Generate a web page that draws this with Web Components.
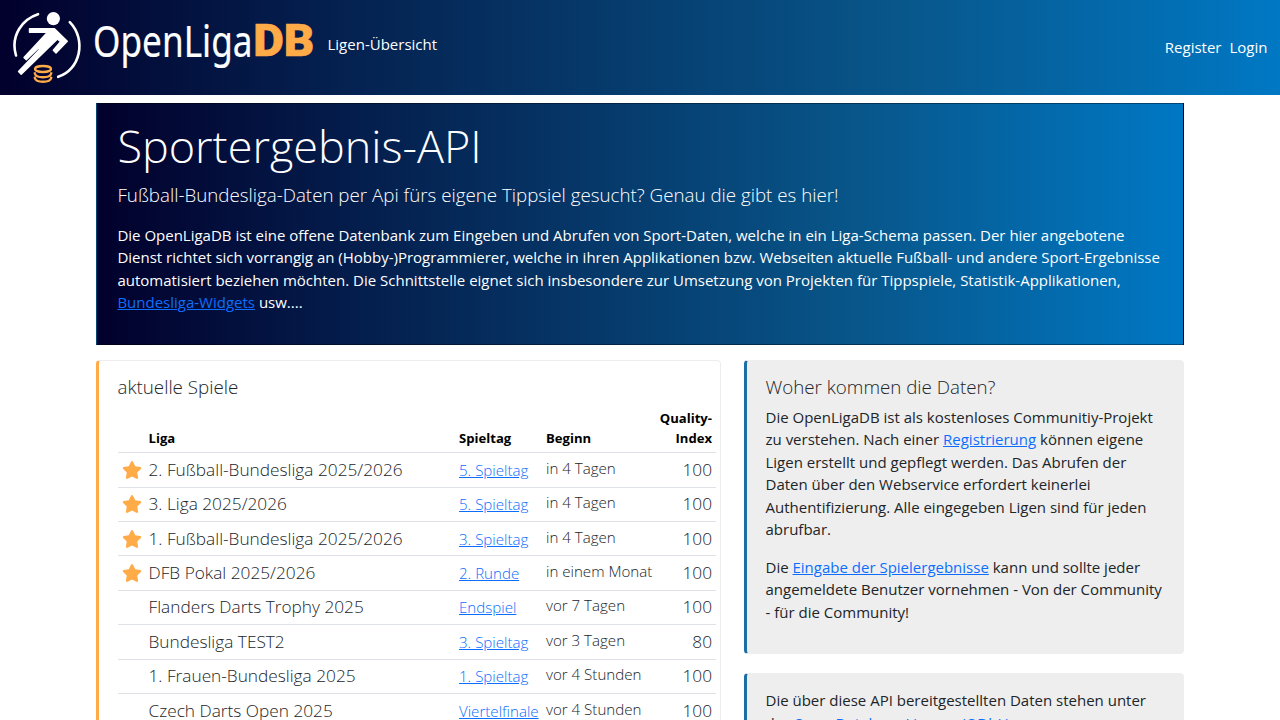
<!DOCTYPE html>
<html lang="de">
<head>
<meta charset="utf-8">
<title>OpenLigaDB</title>
<style>
html,body{margin:0;height:100%;overflow:hidden;background:#fff}
body{font:15px/22.5px "Open Sans",sans-serif;color:#212529;--sky:linear-gradient(90deg,#02002c,#08568a 70%,#0078c4)}
</style>
</head>
<body>
<liga-page></liga-page>
<script>
const define = (name, css, html, setup) => {
  const t = document.createElement('template');
  t.innerHTML = `<style>*{box-sizing:border-box}${css}</style>${html}`;
  customElements.define(name, class extends HTMLElement {
    constructor() {
      super();
      this.attachShadow({mode: 'open'}).appendChild(t.content.cloneNode(true));
    }
    connectedCallback() { if (setup) setup(this, this.shadowRoot); }
  });
};

define('liga-logo', `:host{display:block;width:302px;height:76px}svg{display:block}text{font-family:"Noto Sans","Open Sans",sans-serif}.db{font-family:Roboto,sans-serif}`, `
<svg width="302" height="76" viewBox="12 10 302 76">
  <g fill="none" stroke="#fff" stroke-linecap="round">
    <path d="M38 14.2C23 19 10 35 16 55.500" stroke-width="2.6"/>
    <path d="M69.800 22.200C87 40 80 70 58.200 76.800" stroke-width="2.6"/>
  </g>
  <circle cx="53.4" cy="18.6" r="6.6" fill="#fff"/>
  <path d="M29.500 28.800H54.500L67.300 41.200L56 53L53.300 50.300L60.500 41.800L57.500 39L21.200 74.300L18.500 71.600L40.500 48.600L38.300 48.200L26.300 59.800L24 57.500L47.500 32.300H29.500Z" fill="#fff" stroke="#fff" stroke-width="1.400" stroke-linejoin="round"/>
  <g fill="none" stroke="#ffab48" stroke-width="2.3">
    <ellipse cx="43" cy="69" rx="8" ry="3"/>
    <path d="M34.800 72.200V73.500C36 78.500 50 78.500 51.200 73.500V72.200M34.800 76.800V78C36 83 50 83 51.200 78V76.800"/>
  </g>
  <text x="93" y="56.500" font-size="44" fill="#fff" stroke="#fff" stroke-width=".2" textLength="159.500" lengthAdjust="spacingAndGlyphs">OpenLiga</text>
  <text class="db" x="253.300" y="56.300" font-size="43.500" font-weight="900" fill="#ffab48" stroke="#ffab48" stroke-width=".6" textLength="61" lengthAdjust="spacingAndGlyphs">DB</text>
</svg>`);

define('liga-header', `:host{display:flex;height:95px;padding:10px 12.500px 0 12px;color:#fff;background:var(--sky)}
nav{flex:1;padding:23px 0 0 3.500px;margin-left:10px}
.user{display:flex;gap:8px;padding-top:26px}`, `
<liga-logo></liga-logo><nav><slot></slot></nav><div class="user"><slot name="user"></slot></div>`);

define('liga-hero', `:host{display:block;height:242px;margin:8px 96px 0;padding:12px 20px 0 20.400px;border:1px solid rgba(0,0,0,.4);background:var(--sky);color:#fff}
h1{font-size:45px;line-height:56px;font-weight:300;margin:2px 0 11px}
.lead{font-size:18.750px;line-height:28px;font-weight:300;margin:-4px 0 14.600px}
p{margin:0}`, `
<h1><slot name="title"></slot></h1><div class="lead"><slot name="lead"></slot></div><p><slot></slot></p>`);

define('liga-link', `:host{display:inline;color:#0d6efd;text-decoration:underline}`, `<slot></slot>`);

define('liga-star', `:host{display:block;width:20px;height:18px}svg{display:block}`, `
<svg width="20" height="18" viewBox="0 0 576 512"><path fill="#ffab48" d="M316.9 18C311.600 7 300.400 0 288.100 0s-23.400 7-28.800 18L195 150.300 51.400 171.500c-12 1.800-22 10.200-25.700 21.700s-.7 24.200 7.900 32.700L137.800 329 113.200 474.700c-2 12 3 24.200 12.900 31.300s23 8 33.800 2.300l128.300-68.500 128.300 68.500c10.800 5.700 23.900 4.900 33.800-2.300s14.900-19.300 12.900-31.300L438.500 329 542.700 225.900c8.600-8.500 11.700-21.200 7.900-32.700s-13.700-19.900-25.700-21.700L381.200 150.300 316.900 18z"/></svg>`);

define('liga-card', `:host{display:block;padding:15px 18px 0 18.500px;border:1px solid #ededed;border-left:3px solid #ffab48;border-radius:4px;background:#fff}
:host([info]){border-color:#eee;border-left-color:#1b6fa5;background:#eee}
h2{font-size:18.750px;line-height:22.500px;font-weight:300;margin:0 0 7.300px}`, `
<h2><slot name="title"></slot></h2><slot></slot>`, (el, root) => {
  if (!el.querySelector('[slot=title]')) root.querySelector('h2').remove();
});

const cols = `display:grid;grid-template-columns:27px 310.500px 87px 114px 1fr;padding-right:4px;border-bottom:1px solid #dee2e6;`;
define('match-head', `:host{${cols}align-items:end;height:47.500px;padding-bottom:4.400px;padding-left:4px;font-size:13.100px;line-height:20px;font-weight:700;color:#000}
.q{text-align:right;margin-left:-10px}`, `
<span></span><span>Liga</span><span>Spieltag</span><span>Beginn</span><span class="q">Quality-<br>Index</span>`);

define('match-row', `:host{${cols}height:34.375px;padding-left:4px;font-weight:300;font-size:15.100px;line-height:26px}
span{white-space:nowrap}
liga-star{margin-top:7.500px}.l,.q{font-size:17.250px;padding-top:3.600px}.s{padding-top:3.600px}.b{padding-top:1.600px}.q{text-align:right}`, `
<div class="st"></div><span class="l"></span><span class="s"><liga-link></liga-link></span><span class="b"></span><span class="q"></span>`, (el, root) => {
  const [l, s, b, q] = el.getAttribute('data').split('|');
  root.querySelector('.l').textContent = l;
  root.querySelector('liga-link').textContent = s;
  root.querySelector('.b').textContent = b;
  root.querySelector('.q').textContent = q;
  if (el.hasAttribute('star')) root.querySelector('.st').appendChild(document.createElement('liga-star'));
});

define('liga-page', `:host{display:block;height:720px;overflow:hidden}
main{display:grid;grid-template-columns:625px 440px;gap:23px;align-items:start;padding:15px 96px 0}
.games{height:700px;padding-right:4px}
aside{display:grid;gap:19px}
p{margin:0 0 15px}
.first{height:294px}.second{height:120px;padding-top:15px}`, `
<liga-header><span>Ligen-Übersicht</span><span slot="user">Register</span><span slot="user">Login</span></liga-header>
<liga-hero><span slot="title">Sportergebnis-API</span><span slot="lead">Fußball-Bundesliga-Daten per Api fürs eigene Tippsiel gesucht? Genau die gibt es hier!</span>Die OpenLigaDB ist eine offene Datenbank zum Eingeben und Abrufen von Sport-Daten, welche in ein Liga-Schema passen. Der hier angebotene Dienst richtet sich vorrangig an (Hobby-)Programmierer, welche in ihren Applikationen bzw. Webseiten aktuelle Fußball- und andere Sport-Ergebnisse automatisiert beziehen möchten. Die Schnittstelle eignet sich insbesondere zur Umsetzung von Projekten für Tippspiele, Statistik-Applikationen, <liga-link>Bundesliga-Widgets</liga-link> usw....</liga-hero>
<main>
<liga-card class="games"><span slot="title">aktuelle Spiele</span>
<match-head></match-head>
<match-row star data="2. Fußball-Bundesliga 2025/2026|5. Spieltag|in 4 Tagen|100"></match-row>
<match-row star data="3. Liga 2025/2026|5. Spieltag|in 4 Tagen|100"></match-row>
<match-row star data="1. Fußball-Bundesliga 2025/2026|3. Spieltag|in 4 Tagen|100"></match-row>
<match-row star data="DFB Pokal 2025/2026|2. Runde|in einem Monat|100"></match-row>
<match-row data="Flanders Darts Trophy 2025|Endspiel|vor 7 Tagen|100"></match-row>
<match-row data="Bundesliga TEST2|3. Spieltag|vor 3 Tagen|80"></match-row>
<match-row data="1. Frauen-Bundesliga 2025|1. Spieltag|vor 4 Stunden|100"></match-row>
<match-row data="Czech Darts Open 2025|Viertelfinale|vor 4 Stunden|100"></match-row>
</liga-card>
<aside>
<liga-card info class="first"><span slot="title">Woher kommen die Daten?</span>
<p>Die OpenLigaDB ist als kostenloses Communitiy-Projekt zu verstehen. Nach einer <liga-link>Registrierung</liga-link> können eigene Ligen erstellt und gepflegt werden. Das Abrufen der Daten über den Webservice erfordert keinerlei Authentifizierung. Alle eingegeben Ligen sind für jeden abrufbar.</p>
<p>Die <liga-link>Eingabe der Spielergebnisse</liga-link> kann und sollte jeder angemeldete Benutzer vornehmen - Von der Community - für die Community!</p></liga-card>
<liga-card info class="second"><p>Die über diese API bereitgestellten Daten stehen unter der <liga-link>Open Database License (ODbL)</liga-link>.</p></liga-card>
</aside>
</main>`);
</script>
</body>
</html>
